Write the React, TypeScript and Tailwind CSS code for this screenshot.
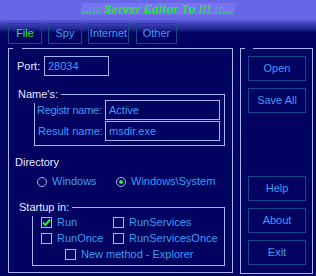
import React from "react";

const font = { fontFamily: '"Liberation Sans", Arial, sans-serif' };

function Tab({ label, active, w }: { label: string; active?: boolean; w: string }) {
  return (
    <div
      className={`${w} h-[21px] border border-[#17488a] flex items-center justify-center text-[11px] ${
        active ? "text-[#22f022]" : "text-[#3d9cf5]"
      }`}
    >
      {label}
    </div>
  );
}

function Field({ value, w }: { value: string; w: string }) {
  return (
    <div className={`${w} h-[20px] border border-[#a3b6f2] flex items-center pl-[3px] text-[11px] text-[#3d9cf5]`}>
      {value}
    </div>
  );
}

function Radio({ label, checked }: { label: string; checked?: boolean }) {
  return (
    <div className="flex items-center gap-[5px]">
      <div className="w-[10px] h-[10px] rounded-full border border-[#a3b6f2] flex items-center justify-center">
        {checked && <div className="w-[4px] h-[4px] rounded-full bg-[#22f022]" />}
      </div>
      <span className="text-[#3d9cf5]">{label}</span>
    </div>
  );
}

function Check({ label, checked }: { label: string; checked?: boolean }) {
  return (
    <div className="flex items-center gap-[5px] h-[11px]">
      <div className="w-[11px] h-[11px] border border-[#a3b6f2] flex items-center justify-center">
        {checked && (
          <svg width="9" height="9" viewBox="0 0 9 9">
            <path d="M1 4.5 L3.5 7 L8 1.5" stroke="#22f022" strokeWidth="2" fill="none" />
          </svg>
        )}
      </div>
      <span className="text-[#3d9cf5] leading-[11px]">{label}</span>
    </div>
  );
}

function Btn({ label, className = "" }: { label: string; className?: string }) {
  return (
    <div
      className={`w-[58px] h-[25px] border border-[#12488c] flex items-center justify-center text-[11px] text-[#3d9cf5] ${className}`}
    >
      {label}
    </div>
  );
}

export default function App() {
  return (
    <div className="w-[316px] h-[276px] bg-[#020260] overflow-hidden text-[11px] whitespace-nowrap" style={font}>
      {/* title bar */}
      <div className="h-[20px] bg-[#6666e6] flex justify-center pt-[3px]">
        <div className="w-[154px] h-[12px] -skew-x-12 bg-[#7474f4] flex items-center justify-center">
          <span className="skew-x-12 italic font-bold text-[11px] leading-[12px] tracking-[0.4px] text-[#22ee22]">
            ...:: Server Editor To !!! ::...
          </span>
        </div>
      </div>

      {/* tabs */}
      <div className="h-[28px] flex pl-[8px] pt-[3px] gap-[6px] bg-[linear-gradient(to_bottom,#5a5adc_0px,#3838b0_5px,#1e2888_9px,#020260_13px)]">
        <Tab label="File" active w="w-[34px]" />
        <Tab label="Spy" w="w-[34px]" />
        <Tab label="Internet" w="w-[41px]" />
        <Tab label="Other" w="w-[41px] ml-[1px]" />
      </div>

      <div className="flex pl-[8px] gap-[7px]">
        {/* main panel */}
        <div className="relative w-[225px] h-[225px] border border-[#a3b6f2]">
          <div className="absolute -top-px left-[4px] w-[9px] h-px bg-[#020260]" />

          <div className="mt-[7px] pl-[8px] flex items-center">
            <span className="w-[27px] text-[#e8e8ff]">Port:</span>
            <Field value="28034" w="w-[65px]" />
          </div>

          <div className="relative mt-[18px] ml-[25px] w-[191px] h-[52px] border border-[#a3b6f2] pt-[5px] pl-[2px] flex flex-col gap-[1px]">
            <span className="absolute left-[-19px] top-[-9px] h-[17px] leading-[17px] pl-[2px] pr-[3px] bg-[#020260] text-[#e8e8ff]">
              Name's:
            </span>
            <div className="flex items-center">
              <span className="w-[68px] text-[#3d9cf5] tracking-[-0.3px]">Registr name:</span>
              <Field value="Active" w="w-[115px]" />
            </div>
            <div className="flex items-center">
              <span className="w-[68px] text-[#3d9cf5] pl-[1px]">Result name:</span>
              <Field value="msdir.exe" w="w-[115px]" />
            </div>
          </div>

          <div className="mt-[10px] pl-[6px] h-[13px] leading-[13px] text-[#e8e8ff]">Directory</div>

          <div className="mt-[6px] pl-[28px] flex items-center h-[13px]">
            <div className="w-[79px]">
              <Radio label="Windows" />
            </div>
            <Radio label="Windows\System" checked />
          </div>

          <div className="relative mt-[19px] ml-[23px] w-[193px] h-[59px] border border-[#a3b6f2] pt-[9px] pl-[8px] flex flex-col gap-[5px]">
            <span className="absolute left-[-16px] top-[-9px] h-[17px] leading-[17px] pl-[2px] pr-[3px] bg-[#020260] text-[#e8e8ff]">
              Startup in:
            </span>
            <div className="flex">
              <div className="w-[72px]">
                <Check label="Run" checked />
              </div>
              <Check label="RunServices" />
            </div>
            <div className="flex">
              <div className="w-[72px]">
                <Check label="RunOnce" />
              </div>
              <Check label="RunServicesOnce" />
            </div>
            <div className="pl-[24px]">
              <Check label="New method - Explorer" />
            </div>
          </div>
        </div>

        {/* right panel */}
        <div className="relative w-[73px] h-[226px] border border-[#a3b6f2] pt-[7px] pl-[7px] flex flex-col gap-[7px]">
          <div className="absolute -top-px left-[4px] w-[8px] h-px bg-[#020260]" />
          <Btn label="Open" />
          <Btn label="Save All" />
          <Btn label="Help" className="mt-[56px]" />
          <Btn label="About" />
          <Btn label="Exit" />
        </div>
      </div>
    </div>
  );
}
